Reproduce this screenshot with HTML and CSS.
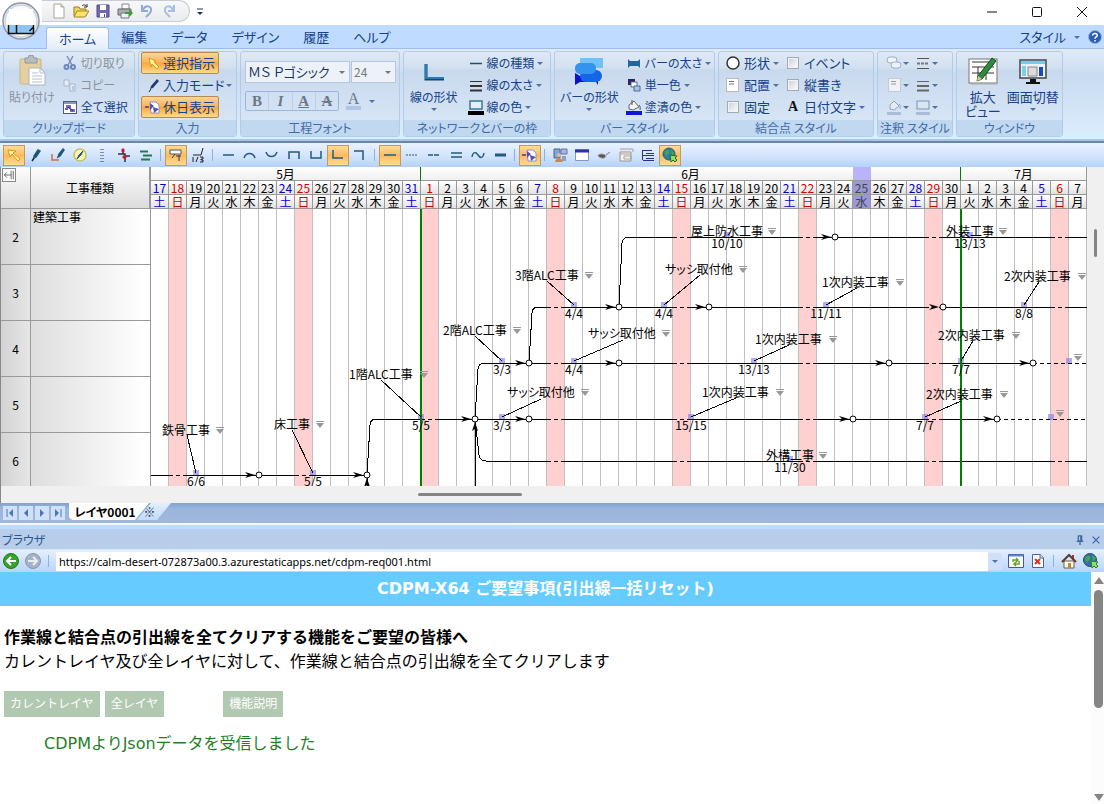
FILE: index.html
```html
<!DOCTYPE html>
<html lang="ja">
<head>
<meta charset="utf-8">
<meta name="viewport" content="width=device-width, initial-scale=1">
<title>CDPM-X64</title>
<link rel="stylesheet" href="styles.css">
</head>
<body>
<header class="titlebar">
  <div class="quick">
    <button class="quick-btn" aria-label="新規"><svg class="ic" viewBox="0 0 16 16"><path d="M3 1h7l3 3v11H3z" fill="#fff" stroke="#aaa59a"/><path d="M10 1v3h3" fill="#ddd" stroke="#aaa59a"/></svg></button>
    <button class="quick-btn" aria-label="開く"><svg class="ic" viewBox="0 0 16 16"><path d="M1 13V4h5l1 2h6v7z" fill="#f4d35b" stroke="#9a7e1c"/><path d="M1 14l3-6h12l-4 6z" fill="#ffe36e" stroke="#a8861c"/><path d="M9 3c2-2 4-1 5 1M14 1v3h-3" fill="none" stroke="#333"/></svg></button>
    <button class="quick-btn" aria-label="保存"><svg class="ic" viewBox="0 0 16 16"><path d="M2 2h12v12H2z" fill="#7268b4" stroke="#51488f"/><path d="M5 2h6v5H5zM5 10h6v4H5z" fill="#fff"/><path d="M9 11h1v3H9z" fill="#51488f"/></svg></button>
    <button class="quick-btn" aria-label="印刷"><svg class="ic" viewBox="0 0 16 16"><path d="M5 1h7v5H5z" fill="#fff" stroke="#888"/><path d="M1 6h13v6H1z" fill="#a9adb2" stroke="#666"/><path d="M4 10h8v5H4z" fill="#eef" stroke="#777"/><path d="M8 9h4V6l4 4-4 4v-3H8z" fill="#3d9c3d"/></svg></button>
    <button class="quick-btn" aria-label="元に戻す"><svg class="ic" viewBox="0 0 16 16"><path d="M3 2v6h6M4 7c2-5 9-5 8 1-1 3-3 4-5 6" fill="none" stroke="#8aabdc" stroke-width="2"/></svg></button>
    <button class="quick-btn" aria-label="やり直し"><svg class="ic" viewBox="0 0 16 16"><path d="M13 2v6H7M12 7c-2-5-9-5-8 1 1 3 3 4 5 6" fill="none" stroke="#a3bfe6" stroke-width="2"/></svg></button>
  </div>
  <button class="quick-more" aria-label="クイックアクセスのカスタマイズ"><svg viewBox="0 0 8 8"><path d="M1 1h6" stroke="#1c3564"/><path d="M1 4h6L4 7z" fill="#1c3564"/></svg></button>
  <div class="window-buttons">
    <button aria-label="最小化"><svg viewBox="0 0 12 12"><path d="M1 6h10" /></svg></button>
    <button aria-label="最大化"><svg viewBox="0 0 12 12"><rect x="1.500" y="1.500" width="9" height="9" rx="1"/></svg></button>
    <button aria-label="閉じる"><svg viewBox="0 0 12 12"><path d="M1 1l10 10M11 1L1 11"/></svg></button>
  </div>
  <button class="orb" aria-label="メニュー"><svg viewBox="0 0 38 38">
    <circle cx="19" cy="19" r="18" fill="#e4e8ee" stroke="#8d97a6" stroke-width="1.500"/>
    <circle cx="19" cy="19" r="16" fill="#f7f9fb" stroke="#c5ccd6"/>
    <path d="M7 7h24v16H7z" fill="#fff"/><path d="M7 23h25v8H7z" fill="#8cc4f4"/>
    <path d="M6.500 23v8.500h25V23M14.500 23v8M27.500 29l4-4" fill="none" stroke="#111" stroke-width="1.500"/></svg></button>
</header>

<nav class="tabs">
  <button class="tab active">ホーム</button>
  <button class="tab">編集</button>
  <button class="tab">データ</button>
  <button class="tab">デザイン</button>
  <button class="tab">履歴</button>
  <button class="tab">ヘルプ</button>
  <div class="tabs-end">
    <button class="style-btn">スタイル<i class="caret"></i></button>
    <button class="help" aria-label="ヘルプを開く"><svg viewBox="0 0 14 14"><circle cx="7" cy="7" r="6.500" fill="#2c5fb8" stroke="#8fb0e4"/><path d="M4.500 5.500C5 2.500 9.500 3 9.300 5.500 9 7 7 7 7 8.700M7 10v1.500" fill="none" stroke="#fff" stroke-width="1.500"/></svg></button>
  </div>
</nav>

<section class="ribbon">
  <div class="group g-clip">
    <div class="group-body">
      <button class="big off"><svg class="ic32" viewBox="0 0 32 32"><rect x="4" y="4" width="21" height="25" rx="1" fill="#e5cf9f" stroke="#c9b68a"/><path d="M9 3h3a3 3 0 0 1 6 0h3v5H9z" fill="#b8bcc2" stroke="#9298a0"/><path d="M13 13h11l5 5v12H13z" fill="#fff" stroke="#a9b4c2"/><path d="M24 13v5h5M16 18h6M16 21h10M16 24h10M16 27h10" fill="none" stroke="#b5bfcc"/></svg><span>貼り付け</span></button>
      <div class="stack">
        <button class="small off"><svg class="ic" viewBox="0 0 16 16"><path d="M5 1l5 9M11 1L6 10" stroke="#7f8fae" stroke-width="1.500"/><circle cx="4.500" cy="12" r="2" fill="none" stroke="#6d86bd" stroke-width="2"/><circle cx="11" cy="12" r="2" fill="none" stroke="#6d86bd" stroke-width="2"/></svg>切り取り</button>
        <button class="small off"><svg class="ic" viewBox="0 0 16 16"><path d="M2 3h5v6H2zM8 7h5v7H8z" fill="#e9eef6" stroke="#a6b5cc"/><path d="M10 10h2M10 12h2" stroke="#8ea2c4"/></svg>コピー</button>
        <button class="small"><svg class="ic" viewBox="0 0 16 16"><rect x="1.500" y="2.500" width="13" height="12" fill="#fff" stroke="#4d5a7c"/><path d="M2 4h12" stroke="#8b97b5" stroke-width="2"/><path d="M4 6h5v3H4zM8 10h5v3H8z" fill="#7e6cc4"/><path d="M3 10h3M6 8l5 4" stroke="#40348c" stroke-width="1.500"/></svg>全て選択</button>
      </div>
    </div>
    <h2 class="caption">クリップボード</h2>
  </div>

  <div class="group g-input">
    <div class="group-body">
      <div class="stack">
        <button class="small lit"><svg class="ic" viewBox="0 0 16 16"><path d="M4 3l7 3-2 1 5 5-2 2-5-5-1 3z" fill="#fff3a0" stroke="#d59b1c"/></svg>選択指示</button>
        <button class="small"><svg class="ic" viewBox="0 0 16 16"><path d="M12 2l2 2-6 7-3 1 1-3z" fill="#223a78"/><path d="M4 15l2-3" stroke="#222"/></svg>入力モード<i class="caret"></i></button>
        <button class="small lit"><svg class="ic" viewBox="0 0 16 16"><path d="M5 3h6l3 3v8H6z" fill="#fff" stroke="#8a94c4"/><path d="M0 8h4" stroke="#443a9a" stroke-width="1.500"/><path d="M5 4l4 3-4 4zM8 8l6 2-5 4z" fill="#5a4fb4"/></svg>休日表示</button>
      </div>
    </div>
    <h2 class="caption">入力</h2>
  </div>

  <div class="group g-font">
    <div class="group-body font-body">
      <div class="font-row">
        <label class="pick family"><select aria-label="フォント名"><option>ＭＳ Ｐゴシック</option></select></label>
        <label class="pick size"><select aria-label="フォントサイズ"><option>24</option></select></label>
      </div>
      <div class="font-row">
        <div class="marks"><button><b>B</b></button><button><em>I</em></button><button><u>A</u></button><button><s>A</s></button></div>
        <button class="font-color"><span>A</span><i class="caret"></i></button>
      </div>
    </div>
    <h2 class="caption">工程フォント</h2>
  </div>

  <div class="group g-line">
    <div class="group-body">
      <button class="big"><svg class="ic32" viewBox="0 0 32 32"><path d="M8 9v15h18" fill="none" stroke="#14466f" stroke-width="3"/><path d="M8 9v14h18" fill="none" stroke="#277cb4" stroke-width="2"/></svg><span>線の形状</span><i class="caret"></i></button>
      <div class="stack">
        <button class="small"><svg class="ic" viewBox="0 0 16 16"><path d="M2 8.500h12" stroke="#234c72" stroke-width="1.500"/></svg>線の種類<i class="caret"></i></button>
        <button class="small"><svg class="ic" viewBox="0 0 16 16"><path d="M2 4.500h12" stroke="#333"/><path d="M2 9h12" stroke="#333" stroke-width="2"/><path d="M2 13.500h12" stroke="#333" stroke-width="2"/></svg>線の太さ<i class="caret"></i></button>
        <button class="small"><svg class="ic" viewBox="0 0 16 16"><rect x="2" y="2" width="12" height="8" fill="#e6f0f8" stroke="#3a7898" stroke-width="1.500"/><path d="M0 12h16v4H0z"/></svg>線の色<i class="caret"></i></button>
      </div>
    </div>
    <h2 class="caption">ネットワークとバーの枠</h2>
  </div>

  <div class="group g-bar">
    <div class="group-body">
      <button class="big"><svg class="ic32" viewBox="0 0 32 32"><path d="M7 3h23v10H7z" fill="#6fc2f5"/><path d="M2 18l5 3h18v-3l0 9 0 3-2-3H7l-5 3z" fill="#0a10d8"/><rect x="7" y="15" width="22" height="12" rx="6" fill="#1565e8"/><rect x="2" y="8" width="21" height="11" rx="5" fill="#3492f0"/></svg><span>バーの形状</span><i class="caret"></i></button>
      <div class="stack">
        <button class="small"><svg class="ic" viewBox="0 0 16 16"><path d="M2 4l2 2h8l2-2v9l-2-2H4l-2 2z" fill="#20689c"/></svg>バーの太さ<i class="caret"></i></button>
        <button class="small"><svg class="ic" viewBox="0 0 16 16"><path d="M2 2h7v6H2z" fill="#2b2758"/><path d="M5 5h6v5H5z" fill="#fff" stroke="#5b6a96"/><path d="M8 9h6v5H8z" fill="#a9c3e6" stroke="#4d699c"/></svg>単一色<i class="caret"></i></button>
        <button class="small"><svg class="ic" viewBox="0 0 16 16"><path d="M3 6l5-4 5 6-6 3-4-1z" fill="#f4f4ef" stroke="#666"/><path d="M6 1v5M13 6c2 2 1 4 1 5" fill="none" stroke="#555"/><path d="M0 12h16v4H0z" fill="#1216dc"/></svg>塗潰の色<i class="caret"></i></button>
      </div>
    </div>
    <h2 class="caption">バー スタイル</h2>
  </div>

  <div class="group g-node">
    <div class="group-body">
      <div class="stack">
        <button class="small"><svg class="ic" viewBox="0 0 16 16"><circle cx="8" cy="8" r="6" fill="#fff" stroke="#333" stroke-width="1.500"/></svg>形状<i class="caret"></i></button>
        <button class="small"><svg class="ic" viewBox="0 0 16 16"><rect x="1.500" y="1.500" width="12" height="13" fill="#fff" stroke="#bbb"/><path d="M4 4.500h5M4 7h5" stroke="#777"/></svg>配置<i class="caret"></i></button>
        <label class="small"><input type="checkbox">固定</label>
      </div>
      <div class="stack">
        <label class="small"><input type="checkbox">イベント</label>
        <label class="small"><input type="checkbox">縦書き</label>
        <button class="small"><span class="letter">A</span>日付文字<i class="caret"></i></button>
      </div>
    </div>
    <h2 class="caption">結合点 スタイル</h2>
  </div>

  <div class="group g-note">
    <div class="group-body">
      <div class="stack">
        <button class="small" aria-label="注釈の形状"><svg class="ic" viewBox="0 0 16 16"><rect x="1" y="2" width="10" height="6" rx="3" fill="#eef3fa" stroke="#9aaecb"/><rect x="5" y="7" width="10" height="6" rx="3" fill="#eef3fa" stroke="#9aaecb"/></svg><i class="caret"></i></button>
        <button class="small" aria-label="注釈の配置"><svg class="ic" viewBox="0 0 16 16"><rect x="2.500" y="1.500" width="12" height="13" fill="#f0f2f6" stroke="#c3cad4"/><path d="M5 4.500h5M5 7h5" stroke="#999"/></svg><i class="caret"></i></button>
        <button class="small" aria-label="注釈の塗潰"><svg class="ic" viewBox="0 0 16 16"><path d="M4 6l4-4 5 5-5 4-4-1z" fill="#e3ebf5" stroke="#8fa2be"/><path d="M13 5c2 2 1 4 1 5" fill="none" stroke="#8fa2be"/><path d="M1 13h14v3H1z" fill="#a9bcd8"/></svg><i class="caret"></i></button>
      </div>
      <div class="stack">
        <button class="small" aria-label="注釈線の種類"><svg class="ic" viewBox="0 0 16 16"><path d="M2 3.500h12M2 13.500h12" stroke="#555"/><path d="M2 8.500h12" stroke="#777" stroke-width="2" stroke-dasharray="3 1"/></svg><i class="caret"></i></button>
        <button class="small" aria-label="注釈線の太さ"><svg class="ic" viewBox="0 0 16 16"><path d="M2 4.500h12" stroke="#666"/><path d="M2 9h12M2 13.500h12" stroke="#666" stroke-width="2"/></svg><i class="caret"></i></button>
        <button class="small" aria-label="注釈線の色"><svg class="ic" viewBox="0 0 16 16"><rect x="2" y="2" width="12" height="8" fill="#d9e6f4" stroke="#7b93b3"/><path d="M1 13h14v3H1z" fill="#a9bcd8"/></svg><i class="caret"></i></button>
      </div>
    </div>
    <h2 class="caption">注釈 スタイル</h2>
  </div>

  <div class="group g-window">
    <div class="group-body">
      <button class="big"><svg class="ic32" viewBox="0 0 32 32"><rect x="2" y="4" width="28" height="24" fill="#fff" stroke="#777"/><path d="M30 5v24H3" fill="none" stroke="#aaa"/><path d="M5 7h22M5 12h22M5 18h22M11 12v13M19 12v13" stroke="#333" fill="none"/><path d="M25 3l4 3-14 18-5 2 1-5z" fill="#2f8a3c" stroke="#184c22"/><path d="M11 21l4 3-5 2z" fill="#e7c590"/></svg><span>拡大<br>ビュー</span></button>
      <button class="big"><svg class="ic32" viewBox="0 0 32 32"><path d="M3 5h26v18H3z" fill="#eaf3fb" stroke="#444" stroke-width="1.500"/><path d="M4 6h24v3H4z" fill="#69d3ee"/><path d="M5 11h4v10H5z" fill="#7fcfe8"/><path d="M11 12h9v9h-9z" fill="#ddd" stroke="#888"/><path d="M22 12h4v9h-4z" fill="#1e49b4"/><path d="M13 24h6v3h4v2H9v-2h4z" fill="#111"/></svg><span>画面切替</span><i class="caret"></i></button>
    </div>
    <h2 class="caption">ウィンドウ</h2>
  </div>
</section>

<div class="toolbar" role="toolbar" aria-label="描画ツール">
  <button class="tool lit" aria-label="選択"><svg viewBox="0 0 16 16"><path d="M2 3l8 1-3 2 7 6-2 2-6-7-2 3z" fill="#fff3a0" stroke="#d59b1c" stroke-width="1"/></svg></button>
  <button class="tool" aria-label="ペン"><svg viewBox="0 0 16 16"><path d="M10 3l2 1-4 6-2 1v-2z" fill="#1e3876"/><path d="M4 14l2-3" stroke="#222"/></svg></button>
  <button class="tool" aria-label="折れ線ペン"><svg viewBox="0 0 16 16"><path d="M2 7v6h7" fill="none" stroke="#d06b4a"/><path d="M13 2l1 1-4 6-2 1 1-3z" fill="#1e3876"/></svg></button>
  <button class="tool" aria-label="方位"><svg viewBox="0 0 16 16"><circle cx="8" cy="8" r="6" fill="#fbf7b0" stroke="#c8c060"/><path d="M11 4L7 8l-2 4 4-4z" fill="#2a6a8a" stroke-width="1"/></svg></button>
  <button class="tool" aria-label="縦線"><svg viewBox="0 0 16 16"><path d="M7 2v13M9 2v13" stroke="#335" stroke-width="1" stroke-dasharray="1 2"/></svg></button>
  <button class="tool" aria-label="結合"><svg viewBox="0 0 16 16"><path d="M7 2v5h2v8M2 7h5M9 9h5" fill="none" stroke="#333"/><path d="M6 2h2v3H6zM7 9h3v2H7z" fill="#c21f2c" stroke="#c21f2c" stroke-width="1"/></svg></button>
  <button class="tool" aria-label="バー"><svg viewBox="0 0 16 16"><path d="M2 4.500h8M5 8.500h9M3 12.500h9" stroke="#25784f" stroke-width="2"/></svg></button>
  <i class="sep"></i>
  <button class="tool lit" aria-label="引出線"><svg viewBox="0 0 16 16"><path d="M2 3h11v4H2z" fill="#fff" stroke="#555" stroke-width="1"/><path d="M7 7l-3 4M8 9h5M11 8v6" fill="none" stroke="#335" stroke-width="1"/></svg></button>
  <button class="tool" aria-label="日数"><svg viewBox="0 0 16 16"><path d="M13 1l-2 7M3 8h8M3 10v5M6 15l2-5M10 10h3v2h-2v1h2v2h-3" fill="none" stroke="#222" stroke-width="1"/></svg></button>
  <i class="sep"></i>
  <button class="tool" aria-label="直線"><svg viewBox="0 0 16 16"><path d="M3 8h11"/></svg></button>
  <button class="tool" aria-label="上円弧"><svg viewBox="0 0 16 16"><path d="M2 11c2-6 9-6 11 0"/></svg></button>
  <button class="tool" aria-label="下円弧"><svg viewBox="0 0 16 16"><path d="M2 5c2 6 9 6 11 0"/></svg></button>
  <button class="tool" aria-label="上コの字"><svg viewBox="0 0 16 16"><path d="M3 12V5h10v7"/></svg></button>
  <button class="tool" aria-label="下コの字"><svg viewBox="0 0 16 16"><path d="M3 4v7h10V4"/></svg></button>
  <button class="tool lit" aria-label="L字"><svg viewBox="0 0 16 16"><path d="M3 3v8h10"/></svg></button>
  <button class="tool" aria-label="逆L字"><svg viewBox="0 0 16 16"><path d="M2 4h9v9"/></svg></button>
  <i class="sep"></i>
  <button class="tool lit" aria-label="実線"><svg viewBox="0 0 16 16"><path d="M2 8h12"/></svg></button>
  <button class="tool" aria-label="点線"><svg viewBox="0 0 16 16"><path d="M2 8h12" stroke-width="1" stroke-dasharray="2 1"/></svg></button>
  <button class="tool" aria-label="破線"><svg viewBox="0 0 16 16"><path d="M2 8h12" stroke-dasharray="5 1"/></svg></button>
  <button class="tool" aria-label="二重線"><svg viewBox="0 0 16 16"><path d="M3 6h11M3 10h11"/></svg></button>
  <button class="tool" aria-label="波線"><svg viewBox="0 0 16 16"><path d="M2 10c1-6 4-5 6-2s5 4 6-2"/></svg></button>
  <button class="tool" aria-label="太線"><svg viewBox="0 0 16 16"><path d="M3 8h11" stroke-width="3"/></svg></button>
  <i class="sep"></i>
  <button class="tool lit" aria-label="休日"><svg viewBox="0 0 16 16"><path d="M5 3h6l3 3v8H6z" fill="#fff" stroke="#8a94c4" stroke-width="1"/><path d="M0 8h4" stroke="#443a9a"/><path d="M5 4l4 3-4 4zM8 8l6 2-5 4z" fill="#5a4fb4" stroke="none"/></svg></button>
  <i class="sep"></i>
  <button class="tool" aria-label="担当者"><svg viewBox="0 0 16 16"><path d="M2 2h6v9H2z" fill="#7da7e0" stroke="#567" stroke-width="1"/><circle cx="7" cy="8" r="2" fill="#e8b88a" stroke="none"/><path d="M3 15c1-5 7-5 8 0z" fill="#c98c3b" stroke="none"/><path d="M9 2h6v5H9z" fill="#a9b8e4" stroke="#6a6fa8" stroke-width="1"/><path d="M10 9h4v5h-4z" fill="#8ea1bf" stroke="none"/></svg></button>
  <button class="tool" aria-label="ウィンドウ"><svg viewBox="0 0 16 16"><path d="M1.500 2.500h13v11h-13z" fill="#fff" stroke="#8a94cc" stroke-width="1"/><path d="M1 4h14" stroke="#2b31a8" stroke-width="3"/></svg></button>
  <button class="tool" aria-label="塗り"><svg viewBox="0 0 16 16"><path d="M2 8c3-2 7-1 8 1-1 3-5 3-8 0z" fill="#555" stroke="#aaa" stroke-width="1"/><path d="M10 8l4-3" stroke="#777" stroke-width="1"/></svg></button>
  <button class="tool" aria-label="帳票"><svg viewBox="0 0 16 16"><path d="M2 5h11v9H2z" fill="#f4f2ee" stroke="#9a938e" stroke-width="1"/><path d="M2 2h13v3M2 7h11M6 9h7v3H6z" stroke="#aaa29c" stroke-width="1"/></svg></button>
  <button class="tool" aria-label="ツリー"><svg viewBox="0 0 16 16"><path d="M2.500 3v10M2 3.500h10M3 8.500h11M3 13.500h11M6 6.500h8M6 11.500h8" stroke="#30308c" stroke-width="1"/></svg></button>
  <button class="tool lit" aria-label="ブラウザ"><svg viewBox="0 0 16 16"><circle cx="7" cy="7" r="6" fill="#2d7fa8" stroke="#24606f" stroke-width="1"/><path d="M3 4c3-2 5 0 4 2s-3 1-3 4M9 3l3 3-2 3z" fill="#49a746" stroke="none"/><path d="M8 8l7 1-2 2 2 2-2 2-2-2-2 2z" fill="#8fe06a" stroke="#1e6a25" stroke-width="1"/></svg></button>
</div>

<main class="schedule">
  <div class="pane">
    <table class="works">
      <colgroup><col class="col-no"><col class="col-name"></colgroup>
      <thead><tr><th><button class="fold" aria-label="列を畳む"><svg viewBox="0 0 14 14"><path d="M1.500 7h8M4.500 4l-3 3 3 3M9.500 2v10M12 2v10" fill="none" stroke="#555"/></svg></button></th><th>工事種類</th></tr></thead>
      <tbody>
        <tr><th>2</th><td>建築工事</td></tr>
        <tr><th>3</th><td></td></tr>
        <tr><th>4</th><td></td></tr>
        <tr><th>5</th><td></td></tr>
        <tr><th>6</th><td></td></tr>
      </tbody>
    </table>
    <div class="timeline">
      <table class="calendar" id="calendar"></table>
      <svg class="network" id="network" width="936" height="280" viewBox="0 0 936 280"></svg>
    </div>
    <div class="vscroll"><i></i></div>
  </div>
  <div class="hscroll"><i></i></div>
</main>

<div class="sheets">
  <button class="step" aria-label="先頭"><svg viewBox="0 0 12 12"><path d="M3 2v8" stroke="#4a76b8"/><path d="M9 2v8L5 6z"/></svg></button>
  <button class="step" aria-label="前へ"><svg viewBox="0 0 12 12"><path d="M8 2v8L4 6z"/></svg></button>
  <button class="step" aria-label="次へ"><svg viewBox="0 0 12 12"><path d="M4 2v8l4-4z"/></svg></button>
  <button class="step" aria-label="最後"><svg viewBox="0 0 12 12"><path d="M9 2v8" stroke="#4a76b8"/><path d="M3 2v8l4-4z"/></svg></button>
  <button class="sheet current">レイヤ0001</button>
  <button class="sheet add">※</button>
</div>

<section class="browser">
  <header class="browser-title"><h2>ブラウザ</h2>
    <button aria-label="固定"><svg viewBox="0 0 12 12"><path d="M4 1h4v6H4zM7 1v6M2 7.500h8M6 8v4"/></svg></button>
    <button aria-label="パネルを閉じる"><svg viewBox="0 0 12 12"><path d="M2 2l8 8M10 2l-8 8"/></svg></button>
  </header>
  <form class="address">
    <button type="button" aria-label="戻る"><svg class="ic" viewBox="0 0 16 16"><circle cx="8" cy="8" r="7.500" fill="#35a52a" stroke="#23781c"/><path d="M13 8H4M8 4L4 8l4 4" fill="none" stroke="#fff" stroke-width="2"/></svg></button>
    <button type="button" aria-label="進む"><svg class="ic" viewBox="0 0 16 16"><circle cx="8" cy="8" r="7.500" fill="#a6b3c6" stroke="#8794aa"/><path d="M3 8h9M8 4l4 4-4 4" fill="none" stroke="#e8eef6" stroke-width="2"/></svg></button>
    <i class="sep"></i>
    <input type="text" aria-label="アドレス" value="https://calm-desert-072873a00.3.azurestaticapps.net/cdpm-req001.html">
    <button type="button" class="drop" aria-label="履歴を表示"><i class="caret"></i></button>
    <button type="button" aria-label="更新"><svg class="ic" viewBox="0 0 16 16"><path d="M.500 1.500h15v13H.500z" fill="#fff" stroke="#3e5c98"/><path d="M1 2.500h14" stroke="#5c86cf" stroke-width="2"/><path d="M5 9V7h5M8 5l2 2-2 2M11 8v3H6M8 9l-2 2 2 2" fill="none" stroke="#6aa51c" stroke-width="1.500"/></svg></button>
    <button type="button" aria-label="中止"><svg class="ic" viewBox="0 0 16 16"><path d="M2.500 1.500h8l3 3v10h-11z" fill="#fff" stroke="#4a66a2"/><path d="M10 1v4h4" fill="#cfdcf2" stroke="#4a66a2"/><path d="M5 6l5 5M10 6l-5 5" stroke="#da3324" stroke-width="2"/></svg></button>
    <i class="sep"></i>
    <button type="button" aria-label="ホームページ"><svg class="ic" viewBox="0 0 16 16"><path d="M3 8h10v7H3z" fill="#fffbe8" stroke="#6e5b4a"/><path d="M11 2h2v4h-2z" fill="#a33"/><path d="M1 9l7-7 7 7" fill="none" stroke="#5d3b26" stroke-width="2"/><path d="M7 10h3v5H7z" fill="#b98a3c"/></svg></button>
    <button type="button" aria-label="ウェブ"><svg class="ic" viewBox="0 0 16 16"><circle cx="7" cy="7" r="6.500" fill="#2f6fae" stroke="#24506f"/><path d="M2 5c3-4 6-2 5 1s-3 1-3 5M9 2l4 3-3 4z" fill="#49a746"/><path d="M8 8l7 1-2 2 2 2-2 2-2-2-2 2z" fill="#8fe06a" stroke="#2c7a30"/></svg></button>
  </form>
  <div class="view">
    <article class="page">
      <h1>CDPM-X64 ご要望事項(引出線一括リセット)</h1>
      <div class="page-body">
        <p class="lead">作業線と結合点の引出線を全てクリアする機能をご要望の皆様へ</p>
        <p>カレントレイヤ及び全レイヤに対して、作業線と結合点の引出線を全てクリアします</p>
        <div class="actions">
          <button>カレントレイヤ</button><button>全レイヤ</button><button class="apart">機能説明</button>
        </div>
        <p class="status">CDPMよりJsonデータを受信しました</p>
      </div>
    </article>
    <div class="page-scroll"><i class="up"></i><i class="thumb"></i><i class="down"></i></div>
  </div>
</section>
<script src="chart.js"></script>
</body>
</html>
```

FILE: styles.css
```css
* { box-sizing: border-box; }

body {
  margin: 0;
  min-height: 100vh;
  display: flex;
  flex-direction: column;
  background: #fff;
  color: #000;
  font: 12px/16px "Noto Sans CJK JP", sans-serif;
}

h1, h2, p { margin: 0; font-weight: normal; }

button {
  margin: 0;
  padding: 0;
  border: 0;
  background: none;
  color: inherit;
  font: inherit;
  font-feature-settings: inherit;
  white-space: nowrap;
}

svg { display: block; flex: none; }
.ic { width: 16px; height: 16px; }
.ic32 { width: 32px; height: 32px; }

.caret {
  flex: none;
  width: 0;
  height: 0;
  border: 3px solid transparent;
  border-top-color: #5072a4;
  border-bottom: 0;
}

/* title bar */
.titlebar {
  position: relative;
  display: flex;
  height: 25px;
  align-items: flex-start;
  padding-left: 42px;
}
.quick {
  display: flex;
  gap: 2px;
  height: 22px;
  align-items: center;
  padding: 0 10px 0 7px;
  border: 1px solid #c9cdd3;
  border-left: 0;
  border-radius: 0 11px 11px 0;
  background: linear-gradient(#f7f8f9, #e9ebee);
}
.quick-btn { width: 20px; display: flex; justify-content: center; }
.quick-more { width: 20px; height: 24px; display: flex; align-items: center; justify-content: center; }
.quick-more svg { width: 8px; height: 8px; }
.window-buttons { display: flex; margin-left: auto; }
.window-buttons button { width: 45px; height: 24px; display: flex; align-items: center; justify-content: center; }
.window-buttons svg { width: 12px; height: 12px; fill: none; stroke: #111; }
.orb { position: absolute; left: 2px; top: 2px; z-index: 2; }
.orb svg { width: 38px; height: 38px; }

/* ribbon tabs */
.tabs, .ribbon, .browser-title, .schedule { font-feature-settings: "palt"; }
.tabs {
  display: flex;
  height: 24px;
  align-items: flex-end;
  padding-left: 46px;
  background: #bfdbff;
  border-bottom: 1px solid #9dbde6;
  color: #15428b;
  font-size: 13px;
}
.tab { height: 22px; padding: 0 12px; line-height: 20px; }
.tab.active {
  margin-bottom: -1px;
  border: 1px solid #9dbde6;
  border-bottom: 0;
  border-radius: 3px 3px 0 0;
  background: linear-gradient(#fff, #e3edf9);
}
.tabs-end { display: flex; align-items: center; gap: 8px; margin-left: auto; height: 22px; padding-right: 2px; }
.style-btn { display: flex; align-items: center; gap: 8px; line-height: 20px; }
.help svg { width: 14px; height: 14px; }

/* ribbon */
.ribbon {
  display: flex;
  gap: 3px;
  padding: 2px 3px;
  background: linear-gradient(#dfeaf7, #cfe0f3 22px, #c9dbef 24px, #d8eafb 80px, #d5f2fd);
  border-bottom: 2px solid #a9c4e4;
  color: #15428b;
  font-size: 13px;
}
.group {
  display: flex;
  flex-direction: column;
  border: 1px solid #b4cbe6;
  border-radius: 3px;
  background: linear-gradient(#dfe9f5, #d2e0f0 16px, #c9d9ed 18px, #dbe9f8);
}
.g-clip { width: 132px; }
.g-input { width: 99px; }
.g-font { width: 160px; }
.g-line { width: 148px; }
.g-bar { width: 161px; }
.g-node { width: 156px; }
.g-note { width: 76px; }
.g-window { width: 107px; }
.g-clip, .g-line, .g-bar { font-size: 12px; }
.group-body { display: flex; flex: 1; gap: 2px; padding: 0 2px 2px; }
.caption {
  height: 16px;
  background: #c1d8f1;
  color: #416aa6;
  font-size: 12px;
  line-height: 15px;
  text-align: center;
}
.stack { display: flex; flex-direction: column; align-items: flex-start; }
.small {
  display: flex;
  align-items: center;
  gap: 3px;
  height: 22px;
  padding: 0 2px;
  white-space: nowrap;
}
.big {
  display: flex;
  flex-direction: column;
  align-items: center;
  padding: 3px 3px 0;
  line-height: 14px;
}
.big span { padding-top: 3px; }
.big .caret { margin-top: 4px; }
.off { color: #8c929c; }
.small.lit { border: 1px solid #b58a4e; border-radius: 2px; background: linear-gradient(#fcd49a, #fbb55c 45%, #fba63c 50%, #fddb8c); }
.g-input .small { padding: 0 3px; gap: 2px; }
.g-input .small:not(.lit) { padding: 0 4px; }
.g-line .group-body { padding-left: 3px; gap: 5px; }
.g-node .group-body { padding-left: 4px; }
.g-note .group-body { padding-left: 8px; gap: 6px; }
.g-note .small { padding: 0; gap: 1px; }
.g-window .group-body { padding-left: 5px; gap: 0; }

input[type="checkbox"] {
  appearance: none;
  width: 12px;
  height: 12px;
  margin: 0 2px;
  border: 1px solid #9faab8;
  background: linear-gradient(135deg, #c9ced6, #fff);
  box-shadow: inset 0 0 0 1px #f4f4f4;
}
.letter { width: 16px; font: bold 14px/16px "Liberation Serif", serif; text-align: center; color: #111; }

.font-body { flex-direction: column; gap: 8px; padding: 9px 3px 0 4px; }
.font-row { display: flex; gap: 1px; }
.pick { position: relative; display: flex; height: 22px; border: 1px solid #b3c7e1; background: #edf2f9; }
.pick.family { flex: 1; }
.pick.size { width: 45px; }
.pick::after {
  content: "";
  position: absolute;
  right: 4px;
  top: 9px;
  border: 3px solid transparent;
  border-top-color: #777;
  border-bottom: 0;
}
.pick select {
  appearance: none;
  width: 100%;
  padding: 0 2px;
  border: 0;
  background: none;
  color: #1c3664;
  font: 13px/18px "Noto Sans CJK JP", sans-serif;
  font-feature-settings: inherit;
}
.pick.size select { color: #777; font-size: 12px; }
.marks { display: flex; width: 94px; height: 20px; border: 1px solid #9ab6dc; border-radius: 2px; }
.marks button { flex: 1; font: bold 15px/18px "Liberation Serif", serif; color: #6d7786; }
.marks button + button { border-left: 1px solid #bccfe8; }
.font-color { display: flex; align-items: center; gap: 8px; padding-left: 6px; }
.font-color span { width: 15px; border-bottom: 4px solid #b0c5e6; font: 16px/14px "Liberation Serif", serif; color: #6d7786; }

/* drawing toolbar */
.toolbar {
  display: flex;
  align-items: center;
  height: 26px;
  padding: 0 3px;
  border-top: 2px solid #6a86ac;
  background: linear-gradient(#eaf3ff, #cfe2fc 60%, #b4d2fb);
}
.tool { width: 22px; height: 21px; display: flex; align-items: center; justify-content: center; }
.tool svg { width: 16px; height: 16px; fill: none; stroke: #235a80; stroke-width: 1.5; }
.tool.lit { border: 1px solid #c79a52; background: linear-gradient(#fedb9c, #fdbb60 50%, #fddc8f); }
.sep { width: 1px; height: 12px; margin: 0 4px 0 3px; background: #8fb1e0; }

/* schedule */
.schedule { background: #f0f0f0; border-left: 1px solid #888; }
.pane { display: flex; height: 319px; overflow: hidden; }
.timeline { flex: 0 1 937px; overflow: hidden; border-left: 1px solid #999; background: #fff; }
.works { width: 149px; flex: none; border-spacing: 0; table-layout: fixed; background: #fff; }
.col-no { width: 30px; }
.works th, .works td { padding: 0; font-weight: normal; border-right: 1px solid #999; border-bottom: 1px solid #999; }
.works thead th { height: 42px; background: linear-gradient(#fdfdfd, #dcdcdc); }
.works thead th:first-child { vertical-align: top; }
.works tbody th { height: 56px; background: linear-gradient(90deg, #d3d3d3, #e6e6e6); }
.works tbody td { padding-left: 2px; border-right: 0; vertical-align: top; background: linear-gradient(90deg, #dedede, #fff 95%); }
.fold { display: flex; margin: 1px; border: 1px solid #888; background: #fff; }
.fold svg { width: 12px; height: 12px; }

.calendar { width: 936px; border-spacing: 0; table-layout: fixed; }
.calendar th {
  height: 14px;
  padding: 0;
  border-right: 1px solid #999;
  border-bottom: 1px solid #999;
  background: linear-gradient(#fff, #e2e2e2);
  font-weight: normal;
  line-height: 13px;
  font-feature-settings: normal;
}
.calendar .month { position: relative; background: linear-gradient(#fff, #f0f0f0); }
.calendar .month.end { border-right-color: #008000; }
.calendar .sat { color: #0000c8; }
.calendar .sun { color: #d00000; }
.calendar .today { background: #9a98d8; color: #444; }
.today-mark { position: absolute; top: 0; left: 432px; width: 18px; height: 13px; background: #b9b3f8; }

.network { background: #fff; font-size: 12px; }
.network .holiday { fill: #ffd0d0; }
.network .grid { stroke: #c0c0c0; fill: none; }
.network .month-line { stroke: #008000; stroke-width: 2; }
.network .work { stroke: #000; stroke-width: 1; fill: none; shape-rendering: crispEdges; }
.network .rest { stroke-dasharray: 4 3; }
.network .leader { stroke: #111; shape-rendering: crispEdges; }
.network .node { fill: #fff; stroke: #000; }
.network .handle { fill: #7878e8; opacity: .6; }
.network .flag { fill: #999; }

.vscroll { flex: 1 0 17px; display: flex; justify-content: center; padding-top: 62px; }
.vscroll i { width: 3px; height: 28px; border-radius: 2px; background: #858585; }
.hscroll { display: flex; height: 17px; align-items: center; padding-left: 417px; }
.hscroll i { width: 104px; height: 3px; border-radius: 2px; background: #858585; }

/* sheet tabs */
.sheets {
  display: flex;
  align-items: center;
  gap: 2px;
  height: 20px;
  padding-left: 3px;
  background: linear-gradient(#83a3cf, #9cb5dc 6px, #a0b8de);
}
.step { width: 14px; height: 14px; display: flex; align-items: center; justify-content: center; background: #cfe1f8; }
.step svg { width: 12px; height: 12px; fill: #4a76b8; }
.sheet { align-self: flex-start; height: 17px; line-height: 16px; }
.sheet.current {
  width: 80px;
  margin-left: 2px;
  padding-right: 8px;
  clip-path: polygon(0 0, 100% 0, 66px 100%, 3px 100%, 0 14px);
  background: #fff;
  font-weight: bold;
  font-feature-settings: "palt";
}
.sheet.add {
  width: 34px;
  margin-left: -14px;
  padding-right: 9px;
  clip-path: polygon(14px 0, 100% 0, 20px 100%, 0 100%);
  background: linear-gradient(#e2efff, #c2dafa);
  color: #234;
}

/* browser panel */
.browser { flex: 1; display: flex; flex-direction: column; border-top: 2px solid #f2f7fd; }
.browser-title {
  display: flex;
  align-items: center;
  gap: 6px;
  height: 25px;
  padding: 2px 3px 0 2px;
  border-top: 4px solid #bfdbff;
  border-bottom: 1px solid #d6e6fa;
  background: #b7cde9;
}
.browser-title h2 { margin-right: auto; color: #2c568f; font-size: 12px; }
.browser-title svg { width: 10px; height: 10px; fill: none; stroke: #3d66a5; stroke-width: 1.5; }
.address {
  display: flex;
  align-items: center;
  gap: 6px;
  height: 22px;
  padding: 0 5px 0 3px;
  background: linear-gradient(#e4effd, #b8d4fb);
}
.address .sep { margin: 0 1px; }
.address input {
  flex: 1;
  min-width: 0;
  height: 19px;
  margin-right: -6px;
  padding: 0 0 0 3px;
  border: 0;
  background: #fff;
  font: 11px/18px "Noto Sans", sans-serif;
}
.drop { width: 14px; height: 17px; display: flex; align-items: center; justify-content: center; background: #cfe0f8; }
.view { flex: 1; display: flex; }
.page { flex: 1; font: 16px/24px "DejaVu Sans", "Noto Sans CJK JP", sans-serif; }
.page h1 { padding: 5px; background: #66ccff; color: #fff; font-size: 16px; font-weight: bold; text-align: center; }
.page-body { padding: 20px 4px; }
.lead { font-weight: bold; }
.actions { display: flex; gap: 5px; padding: 17px 0 15px; }
.actions button { height: 26px; padding: 0 6px; background: #b1c8b1; color: #fff; font-size: 12px; }
.actions .apart { margin-left: 54px; }
.status { padding-left: 40px; color: #1f7f1f; }
.page-scroll { display: flex; flex-direction: column; align-items: center; width: 13px; padding: 5px 0 3px 2px; background: #fcfcfc; }
.page-scroll .up { border: 5px solid transparent; border-top: 0; border-bottom: 7px solid #858585; }
.page-scroll .thumb { width: 9px; height: 118px; margin: 6px 0 auto; border-radius: 5px; background: #858585; }
.page-scroll .down { border: 5px solid transparent; border-bottom: 0; border-top: 7px solid #858585; }
```

FILE: chart.js
```js
const DAY = 18;
const DAYS = 52;
const WEEK = ["土", "日", "月", "火", "水", "木", "金"];
const MONTHS = [
  { name: "5月", first: 17, days: 15 },
  { name: "6月", first: 1, days: 30 },
  { name: "7月", first: 1, days: 7 }
];
const TODAY = 39;

function buildCalendar() {
  const dates = MONTHS.flatMap(m => Array.from({ length: m.days }, (_, i) => m.first + i));
  const cls = i => (i === TODAY ? "today" : i % 7 === 0 ? "sat" : i % 7 === 1 ? "sun" : "");
  const months = MONTHS.map((m, i) =>
    `<th class="month ${i < 2 ? "end" : ""}" colspan="${m.days}">${m.name}${i === 1 ? '<i class="today-mark"></i>' : ""}</th>`);
  const row = text => "<tr>" + dates.map((d, i) => `<th class="${cls(i)}">${text(d, i)}</th>`).join("") + "</tr>";
  document.getElementById("calendar").innerHTML =
    `<colgroup>${"<col>".repeat(DAYS)}</colgroup><tr>${months.join("")}</tr>` + row(d => d) + row((d, i) => WEEK[i % 7]);
}

/* Work lines: start x, end x, y, whether the whole line is slack */
const lines = [
  [0, 216, 266], [225, 324, 210], [333, 882, 154], [882, 936, 154, true],
  [324, 846, 210], [846, 936, 210, true], [387, 936, 98], [478, 936, 28], [335, 936, 252]
];
const curves = [
  "M216 266L219 216Q219 210 225 210",
  "M324 210L327 160Q328 154 333 154",
  "M378 154L381 104Q381 98 387 98",
  "M468 98L471 34Q472 28 478 28",
  "M324 210L328 246Q329 252 335 252",
  "M324 280V210M216 280V266"
];
const nodes = [
  [6, 266], [12, 266], [18, 210], [21, 210], [39, 210], [47, 210],
  [21, 154], [26, 154], [41, 154], [49, 154],
  [26, 98], [31, 98], [44, 98], [38, 28]
];
/* Labels: text, x, y, flag x, leader start, handle position, day count */
const labels = [
  ["鉄骨工事", 11, 221, 69, [36, 226], [45, 266], "6/6"],
  ["床工事", 123, 215, 169, [141, 221], [162, 266], "5/5"],
  ["1階ALC工事", 198, 165, 273, [230, 171], [270, 210], "5/5"],
  ["2階ALC工事", 292, 121, 366, [324, 127], [351, 154], "3/3"],
  ["3階ALC工事", 364, 66, 438, [396, 72], [423, 98], "4/4"],
  ["サッシ取付他", 356, 183, 434, [390, 190], [351, 210], "3/3"],
  ["サッシ取付他", 437, 124, 515, [472, 131], [423, 154], "4/4"],
  ["サッシ取付他", 514, 60, 592, [549, 66], [513, 98], "4/4"],
  ["屋上防水工事", 540, 22, 621, null, [576, 28], "10/10"],
  ["1次内装工事", 551, 183, 629, [585, 189], [540, 210], "15/15"],
  ["1次内装工事", 604, 130, 682, [638, 136], [603, 154], "13/13"],
  ["1次内装工事", 671, 73, 749, [706, 79], [675, 98], "11/11"],
  ["外構工事", 615, 246, 672, null, [639, 252], "11/30"],
  ["外装工事", 795, 22, 852, null, [819, 28], "13/13"],
  ["2次内装工事", 853, 67, 931, [888, 73], [873, 98], "8/8"],
  ["2次内装工事", 787, 126, 865, [822, 132], [810, 154], "7/7"],
  ["2次内装工事", 775, 185, 853, [810, 192], [774, 210], "7/7"],
  ["", 0, 148, 927, null, [918, 154], ""],
  ["", 0, 204, 909, null, [900, 210], ""]
];

const isSunday = x => Math.floor(x / DAY) % 7 === 1;

function workLine([x1, x2, y, slack]) {
  if (slack) return `<path class="work rest" d="M${x1} ${y}H${x2}"/>`;
  let out = "";
  for (let x = x1; x < x2;) {
    const next = Math.min(x2, (Math.floor(x / DAY) + 1) * DAY);
    out += `<path class="work ${isSunday(x) ? "rest" : ""}" d="M${x} ${y}H${next}"/>`;
    x = next;
  }
  return out;
}

function buildNetwork() {
  let s = "";
  for (let i = 1; i < DAYS; i += 7) s += `<rect class="holiday" x="${i * DAY}" width="${DAY}" height="280"/>`;
  for (let i = 1; i <= DAYS; i++) s += `<path class="grid" d="M${i * DAY - 0.5} 0V280"/>`;
  for (const [, , , , , h] of labels) s += `<rect class="handle" x="${h[0] - 3}" y="${h[1] - 5}" width="6" height="6"/>`;
  s += lines.map(workLine).join("");
  s += curves.map(d => `<path class="work" d="${d}"/>`).join("");
  s += '<path d="M324 213l-3 9 3-2 3 2zM216 269l-3 9 3-2 3 2z"/>';
  for (const [day, y] of nodes) {
    const x = day * DAY;
    s += `<path d="M${x - 4} ${y}l-10-3 3 3-3 3z"/><circle class="node" cx="${x}" cy="${y}" r="3"/>`;
  }
  s += '<path class="month-line" d="M270 0V280M810 0V280"/>';
  for (const [text, x, y, fx, from, h, count] of labels) {
    if (from) s += `<path class="leader" d="M${from[0]} ${from[1]}L${h[0]} ${h[1] - 2}"/>`;
    if (text) s += `<text x="${x}" y="${y + 5}">${text}</text>`;
    if (count) s += `<text x="${h[0]}" y="${h[1] + 11}" text-anchor="middle">${count}</text>`;
    s += `<path class="flag" d="M${fx - 4} ${y - 3}h8v1h-8zM${fx - 4} ${y - 1}h8l-4 5z"/>`;
  }
  document.getElementById("network").innerHTML = s;
}

buildCalendar();
buildNetwork();
```
